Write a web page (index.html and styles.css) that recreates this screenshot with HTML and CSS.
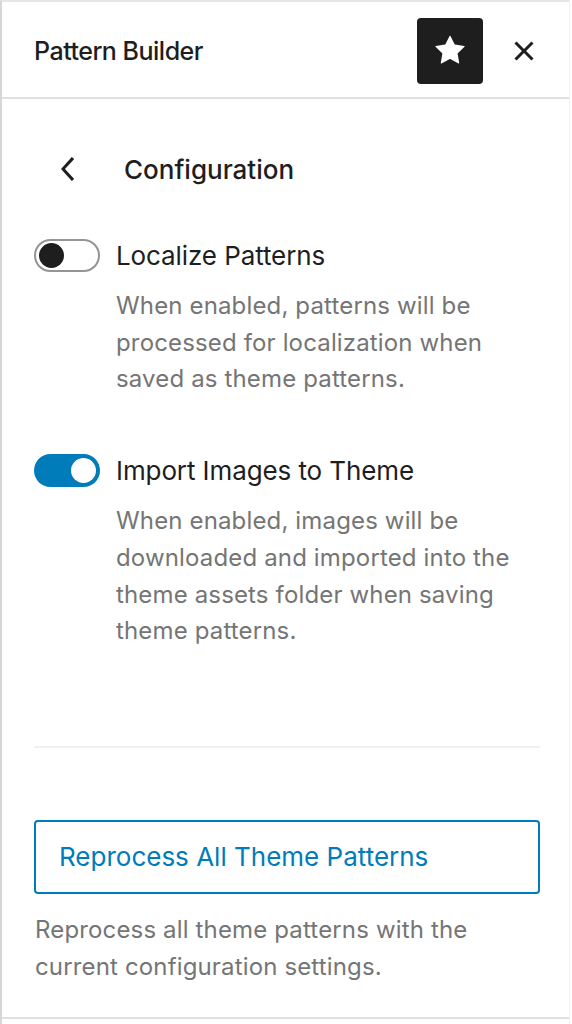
FILE: index.html
```html
<!DOCTYPE html>
<html lang="en">
<head>
<meta charset="utf-8">
<title>Pattern Builder</title>
<link rel="stylesheet" href="styles.css">
</head>
<body>
<div class="panel">
  <header class="header">
    <h2 class="title">Pattern Builder</h2>
    <button class="icon-btn star-btn" aria-label="Pattern Builder">
      <svg viewBox="0 0 24 24" width="48" height="48"><path fill="#fff" d="M11.776 4.454a.25.25 0 01.448 0l2.069 4.192a.25.25 0 00.188.137l4.626.672a.25.25 0 01.139.426l-3.348 3.263a.25.25 0 00-.072.222l.79 4.607a.25.25 0 01-.362.263l-4.138-2.175a.25.25 0 00-.232 0l-4.138 2.175a.25.25 0 01-.363-.263l.79-4.607a.25.25 0 00-.071-.222L4.754 9.881a.25.25 0 01.139-.426l4.626-.672a.25.25 0 00.188-.137l2.069-4.192z"/></svg>
    </button>
    <button class="icon-btn close-btn" aria-label="Close">
      <svg viewBox="0 0 24 24" width="48" height="48"><path fill="#1e1e1e" d="M12 13.06l3.712 3.713 1.061-1.06L13.061 12l3.712-3.712-1.06-1.06L12 10.938 8.288 7.227l-1.061 1.06L10.939 12l-3.712 3.712 1.06 1.061L12 13.061z"/></svg>
    </button>
  </header>

  <div class="content">
    <div class="nav">
      <button class="icon-btn back-btn" aria-label="Back">
        <svg viewBox="0 0 24 24" width="48" height="48"><path fill="#1e1e1e" d="M14.6 7l-1.2-1L8 12l5.4 6 1.2-1-4.6-5z"/></svg>
      </button>
      <h3 class="nav-title">Configuration</h3>
    </div>

    <div class="setting first">
      <div class="toggle-row">
        <span class="toggle off"><span class="knob"></span></span>
        <span class="label">Localize Patterns</span>
      </div>
      <p class="help indent">When enabled, patterns will be processed for localization when saved as theme patterns.</p>
    </div>

    <div class="setting second">
      <div class="toggle-row">
        <span class="toggle on"><span class="knob"></span></span>
        <span class="label">Import Images to Theme</span>
      </div>
      <p class="help indent">When enabled, images will be downloaded and imported into the theme assets folder when saving theme patterns.</p>
    </div>

    <hr class="divider">

    <button class="reprocess">Reprocess All Theme Patterns</button>
    <p class="help bottom-help">Reprocess all theme patterns with the current configuration settings.</p>
  </div>
</div>
</body>
</html>
```

FILE: styles.css
```css
* { box-sizing: border-box; }
html, body { margin: 0; padding: 0; background: #fff; }
body {
  font-family: Inter, "Noto Sans", "Liberation Sans", sans-serif;
  color: #1e1e1e;
}
.panel {
  width: 570px;
  height: 1024px;
  border-left: 2px solid #d6d6d6;
  border-top: 2px solid #e6e6e6;
  border-right: 1px solid #f2f2f2;
  display: flex;
  flex-direction: column;
}
.header {
  height: 97px;
  flex: none;
  display: flex;
  align-items: center;
  gap: 8px;
  padding: 2px 12px 0 32px;
  border-bottom: 2px solid #e0e0e0;
}
.title {
  flex: 1;
  margin: 0;
  font-size: 25px;
  font-weight: 500;
  letter-spacing: -0.5px;
}
.icon-btn {
  border: 0;
  padding: 0;
  margin: 0;
  background: transparent;
  width: 66px;
  height: 66px;
  display: flex;
  align-items: center;
  justify-content: center;
  border-radius: 4px;
}
.star-btn { background: #1e1e1e; }
.content {
  flex: none;
  height: 920px;
  padding: 0 29px 0 32px;
  border-bottom: 2px solid #e0e0e0;
}
.nav {
  display: flex;
  align-items: center;
  gap: 22px;
  margin-top: 37px;
  height: 66px;
}
.back-btn { margin-left: 2px; width: 66px; }
.nav-title {
  margin: 0;
  font-size: 26px;
  font-weight: 500;
  letter-spacing: 0;
}
.setting.first { margin-top: 37px; }
.setting.second { margin-top: 56px; }
.toggle-row {
  display: flex;
  align-items: center;
  gap: 16px;
  height: 33px;
}
.toggle {
  width: 66px;
  height: 33px;
  border-radius: 17px;
  position: relative;
  flex: none;
}
.toggle.off { border: 2px solid #949494; background: #fff; }
.toggle.on { background: #007cba; }
.knob {
  position: absolute;
  top: 4px;
  width: 25px;
  height: 25px;
  border-radius: 50%;
}
.toggle.off .knob { left: 3px; top: 2px; background: #1e1e1e; }
.toggle.on .knob { right: 4px; background: #fff; }
.label {
  font-size: 26px;
  letter-spacing: -0.1px;
}
.help {
  margin: 0;
  font-size: 24px;
  line-height: 36.7px;
  color: #757575;
  letter-spacing: 0.15px;
}
.indent { margin: 16px 0 0 82px; }
.divider {
  border: 0;
  border-top: 2px solid #f0f0f0;
  margin: 96px 0 0 0;
}
.reprocess {
  display: block;
  width: 506px;
  height: 74px;
  margin: 72px 0 0 0;
  border: 2px solid #007cba;
  border-radius: 4px;
  background: #fff;
  color: #007cba;
  font-family: inherit;
  font-size: 26px;
  text-align: left;
  padding: 0 0 0 23px;
  letter-spacing: 0;
}
.bottom-help { margin: 18px 0 0 1px; }
```
